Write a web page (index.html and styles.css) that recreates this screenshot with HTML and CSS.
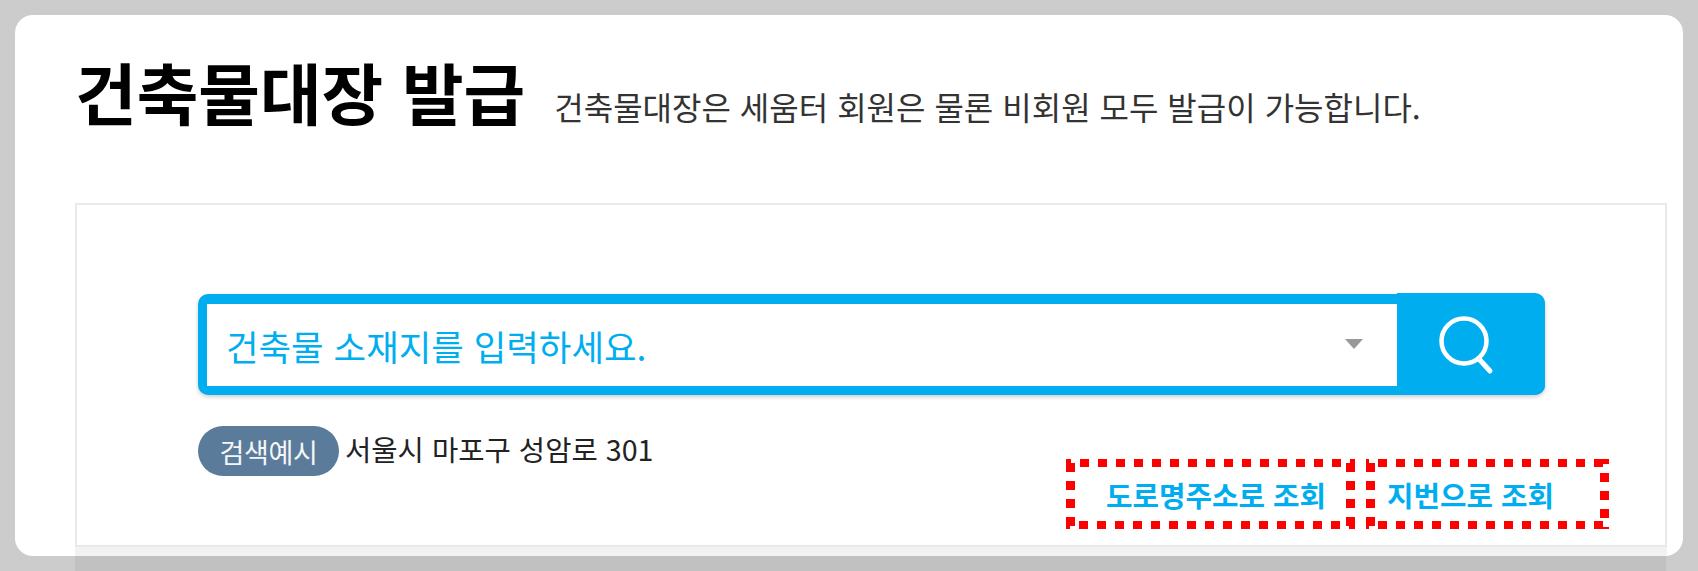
FILE: index.html
```html
<!DOCTYPE html>
<html lang="ko">
<head>
    <meta charset="UTF-8">
    <meta name="viewport" content="width=device-width, initial-scale=1.0">
    <title>건축물대장 발급</title>
    <link rel="stylesheet" href="styles.css">
</head>
<body>

    <div class="card">
        <div class="page-head">
            <h1>건축물대장 발급</h1>
            <p>건축물대장은 세움터 회원은 물론 비회원 모두 발급이 가능합니다.</p>
        </div>

        <div class="panel">
            <div class="search">
                <div class="search-input">
                    <span>건축물 소재지를 입력하세요.</span>
                    <i class="caret"></i>
                </div>
                <button class="search-btn" type="button" aria-label="검색">
                    <svg width="64" height="64" viewBox="0 0 64 64" fill="none" stroke="#fff" stroke-linecap="round">
                        <circle cx="29" cy="27" r="22.5" stroke-width="4.5"/>
                        <path d="M44 45 L55 57" stroke-width="5"/>
                    </svg>
                </button>
            </div>

            <div class="below">
                <div class="example">
                    <span class="badge">검색예시</span>
                    <span class="example-text">서울시 마포구 성암로 301</span>
                </div>
                <div class="links">
                    <a class="link link-road" href="#">도로명주소로 조회</a>
                    <a class="link link-lot" href="#">지번으로 조회</a>
                </div>
            </div>
        </div>
        <div class="panel-foot"></div>
    </div>
    <div class="under"></div>

</body>
</html>
```

FILE: styles.css
```css
body {
    font-family: "Noto Sans CJK KR", "Noto Sans", sans-serif;
    background-color: #cccccc;
    color: #222;
    margin: 0;
    padding: 15px 15px 0;
    height: 571px;
    box-sizing: border-box;
    overflow: hidden;
}

.card {
    width: 1668px;
    height: 541px;
    box-sizing: border-box;
    background-color: #ffffff;
    border-radius: 18px;
    padding-left: 60px;
    overflow: hidden;
}

.page-head {
    height: 188px;
    display: flex;
    align-items: baseline;
    gap: 29px;
}

h1 {
    margin: 0;
    padding-top: 31px;
    font-size: 67px;
    line-height: 90px;
    font-weight: 700;
    color: #000;
}

.page-head p {
    margin: 0;
    font-size: 32px;
    color: #333;
}

.panel {
    width: 1592px;
    height: 344px;
    box-sizing: border-box;
    border: 2px solid #e9e9e9;
    padding: 89px 120px 0 121px;
}

.panel-foot {
    width: 1592px;
    height: 9px;
    background-color: #f2f2f2;
}

.under {
    width: 1591px;
    height: 15px;
    margin-left: 60px;
    background-color: #c1c1c1;
}

.search {
    display: flex;
    height: 101px;
    background-color: #00aeef;
    border-radius: 10px;
    box-shadow: 0 2px 4px rgba(0, 0, 0, 0.2);
}

.search-input {
    flex: 1;
    margin: 10px 0 9px 9px;
    padding: 0 34px 0 19px;
    display: flex;
    align-items: center;
    justify-content: space-between;
    background-color: #ffffff;
    color: #00aeef;
    font-size: 35.4px;
}

.caret {
    width: 0;
    height: 0;
    margin-bottom: 2px;
    border-left: 9px solid transparent;
    border-right: 9px solid transparent;
    border-top: 10px solid #999;
}

.search-btn {
    width: 148px;
    margin-top: -1px;
    padding: 3px 8px 0 0;
    border: 0;
    border-radius: 0 10px 10px 0;
    background-color: #00aeef;
    display: flex;
    align-items: center;
    justify-content: center;
}

.below {
    display: flex;
    justify-content: space-between;
    margin-top: 31px;
    margin-right: -64px;
}

.example {
    display: flex;
    align-items: center;
    align-self: flex-start;
    gap: 6px;
}

.badge {
    width: 141px;
    height: 50px;
    border-radius: 25px;
    background-color: #5b7b9b;
    color: #f4f6f8;
    font-size: 27px;
    letter-spacing: -0.3px;
    display: flex;
    align-items: center;
    justify-content: center;
}

.example-text {
    font-size: 28.6px;
    line-height: 44px;
    margin-bottom: 4px;
}

.links {
    display: flex;
    gap: 11px;
    margin-top: 33px;
}

/* red dotted boxes drawn with tiled gradients so the dots stay square */
.link {
    --top-x: 14px;
    --bottom-x: 13px;
    --right-y: 4px;
    height: 70px;
    box-sizing: border-box;
    display: flex;
    align-items: center;
    color: #00aeef;
    font-size: 28.8px;
    font-weight: 700;
    text-decoration: none;
    background:
        linear-gradient(90deg, #f00 50%, transparent 50%) var(--top-x) 0 / 18px 8px repeat-x,
        linear-gradient(90deg, #f00 50%, transparent 50%) var(--bottom-x) 100% / 18px 8px repeat-x,
        linear-gradient(180deg, #f00 50%, transparent 50%) 0 4px / 9px 18px repeat-y,
        linear-gradient(180deg, #f00 50%, transparent 50%) 100% var(--right-y) / 9px 18px repeat-y;
}

.link-road {
    width: 289px;
    padding-left: 40px;
}

.link-lot {
    --top-x: 12px;
    --bottom-x: 12px;
    --right-y: 14px;
    width: 243px;
    padding-left: 21px;
}
```
